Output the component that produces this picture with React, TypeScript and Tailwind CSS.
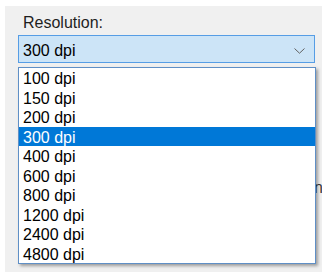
const options = [
  "100 dpi",
  "150 dpi",
  "200 dpi",
  "300 dpi",
  "400 dpi",
  "600 dpi",
  "800 dpi",
  "1200 dpi",
  "2400 dpi",
  "4800 dpi",
];

const selected = "300 dpi";

const Chevron = () => (
  <svg width="11" height="6" viewBox="0 0 11 6" fill="none" aria-hidden="true">
    <path d="M0.5 0.5 5.5 5.2 10.5 0.5" stroke="#606060" strokeWidth="1" />
  </svg>
);

export default function App() {
  return (
    <div
      className="relative h-[272px] w-[322px] overflow-hidden bg-white pl-[5px] pt-[6px] text-[16px] text-black"
      style={{ fontFamily: '"Liberation Sans", Arial, sans-serif' }}
    >
      <div className="h-full w-full bg-[#f0f0f0] pl-[13px] pt-[8px]">
        <div className="pl-[5px] leading-[18px] text-[#1e1e1e]">Resolution:</div>

        <div className="mt-[3px] flex h-[28px] w-[297px] items-start justify-between border border-[#569de5] bg-[#cce4f7] pl-[4px] pr-[9px] pt-[6px]">
          <span className="leading-[18px]">{selected}</span>
          <span className="pt-[6px]">
            <Chevron />
          </span>
        </div>

        <div className="mt-[116px] pl-[296px] leading-[18px] text-[#3a3a3a]">ng</div>
      </div>

      <div
        role="listbox"
        className="absolute left-[18px] top-[67px] w-[298px] border border-[#5f8fc6] bg-white shadow-[2px_2px_3px_rgba(0,0,0,0.35)]"
      >
        {options.map((opt) => (
          <div
            key={opt}
            role="option"
            aria-selected={opt === selected}
            className={
              opt === selected
                ? "h-[19.5px] bg-[#0078d7] pl-[4px] leading-[21px] text-white"
                : "h-[19.5px] pl-[4px] leading-[21px]"
            }
          >
            {opt}
          </div>
        ))}
      </div>
    </div>
  );
}
